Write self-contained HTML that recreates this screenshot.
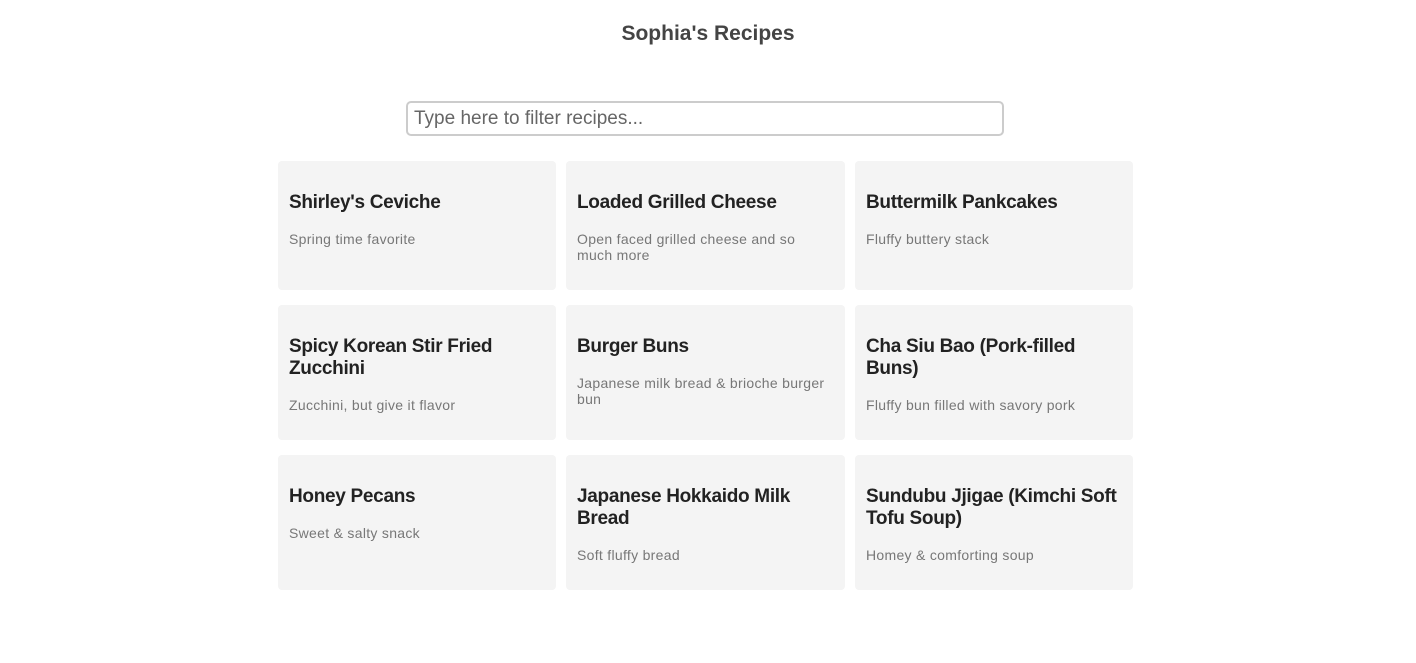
<!DOCTYPE html>
<html><head><style>
body{margin:0;background:#fff;font-family:"Liberation Sans",Arial,sans-serif;}
h1{margin:0;position:absolute;top:21px;left:0;width:1416px;text-align:center;font-size:21px;line-height:26px;color:#444;font-weight:bold;}
.inp{position:absolute;left:406px;top:101px;height:31px;border:2px solid #ccc;border-radius:5px;font-size:19px;color:#666;line-height:31px;padding-left:6px;box-sizing:content-box;width:588px;}
.grid{position:absolute;left:278px;top:161px;width:855px;display:grid;grid-template-columns:278px 279px 278px;column-gap:10px;row-gap:15px;}
.c{background:#f4f4f4;border-radius:4px;padding:31px 6px 27px 11px;}
.t{font-size:19px;font-weight:bold;line-height:22px;color:#222;margin-bottom:17px;letter-spacing:-0.3px;}
.d{font-size:14px;line-height:16px;color:#777;letter-spacing:0.3px;padding-right:12px;}
</style></head><body>
<h1>Sophia's Recipes</h1>
<div class="inp">Type here to filter recipes...</div>
<div class="grid">
<div class="c"><div class="t">Shirley's Ceviche</div><div class="d">Spring time favorite</div></div>
<div class="c"><div class="t">Loaded Grilled Cheese</div><div class="d">Open faced grilled cheese and so much more</div></div>
<div class="c"><div class="t">Buttermilk Pankcakes</div><div class="d">Fluffy buttery stack</div></div>
<div class="c"><div class="t">Spicy Korean Stir Fried Zucchini</div><div class="d">Zucchini, but give it flavor</div></div>
<div class="c"><div class="t">Burger Buns</div><div class="d">Japanese milk bread &amp; brioche burger bun</div></div>
<div class="c"><div class="t">Cha Siu Bao (Pork-filled Buns)</div><div class="d">Fluffy bun filled with savory pork</div></div>
<div class="c"><div class="t">Honey Pecans</div><div class="d">Sweet &amp; salty snack</div></div>
<div class="c"><div class="t">Japanese Hokkaido Milk Bread</div><div class="d">Soft fluffy bread</div></div>
<div class="c"><div class="t">Sundubu Jjigae (Kimchi Soft Tofu Soup)</div><div class="d">Homey &amp; comforting soup</div></div>
</div>
</body></html>
